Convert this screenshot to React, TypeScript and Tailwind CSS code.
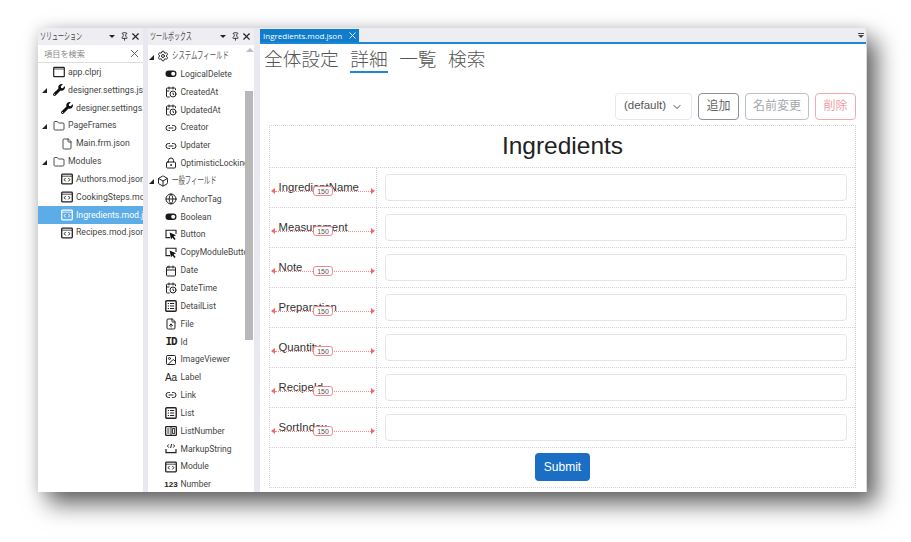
import { Box, Calendar, CalendarClock, ChevronDown, File, FileUp, Folder, Globe, Image, Link2, LockKeyhole, Pin, Settings, X } from "lucide-react"
import { FaWrench } from "react-icons/fa"
import type { ReactNode } from "react"

const uiFont = "font-['Roboto','Noto_Sans_CJK_JP',sans-serif]"
const tabFont = "font-['Open_Sans','Noto_Sans_CJK_JP',sans-serif]"
const webFont = "font-['Liberation_Sans','Noto_Sans_CJK_JP',sans-serif]"

function Toggle() {
  return (
    <svg width="12" height="12" viewBox="0 0 12 12">
      <rect x="0.5" y="2.5" width="11" height="6.5" rx="3.25" fill="#1a1a1a" />
      <circle cx="8.2" cy="5.75" r="2" fill="#fff" />
    </svg>
  )
}

function CodeBox() {
  return (
    <svg width="12" height="12" viewBox="0 0 12 12" fill="none" stroke="currentColor">
      <rect x="0.7" y="1.2" width="10.6" height="9.6" rx="0.8" strokeWidth="1.3" />
      <path d="M1 3.2h10" strokeWidth="0.8" />
      <path d="M4.6 5 3.2 6.7l1.4 1.7M7.4 5l1.4 1.7-1.4 1.7" strokeWidth="1" />
    </svg>
  )
}

function ListBox() {
  return (
    <svg width="12" height="12" viewBox="0 0 12 12" fill="none" stroke="#222">
      <rect x="0.8" y="0.8" width="10.4" height="10.4" rx="1" strokeWidth="1.4" />
      <path d="M2.8 3.5h1.2M5 3.5h4.2M2.8 6h1.2M5 6h4.2M2.8 8.5h1.2M5 8.5h4.2" strokeWidth="1.2" />
    </svg>
  )
}

function NumberBox() {
  return (
    <svg width="12" height="12" viewBox="0 0 12 12" fill="none" stroke="#222">
      <rect x="0.6" y="1.6" width="10.8" height="8.8" rx="0.8" strokeWidth="1.3" />
      <path d="M6 2v8" strokeWidth="1" />
      <path d="M2.2 4h2.2M2.2 6h2.2M2.2 8h2.2" strokeWidth="1" />
      <rect x="7.6" y="3.6" width="2" height="4.8" strokeWidth="0.9" />
    </svg>
  )
}

function Cursor() {
  return (
    <svg width="12" height="12" viewBox="0 0 12 12" fill="none">
      <path d="M5 8.6H1V1.2h10V5" stroke="#222" strokeWidth="1.1" />
      <path d="M4.6 3.6 11 6.2 8.6 7.4l2 2.6-1.2 1-2-2.6-1.4 2z" fill="#111" />
    </svg>
  )
}

function Markup() {
  return (
    <svg width="12" height="12" viewBox="0 0 12 12" fill="none" stroke="#222" strokeWidth="1">
      <path d="M1 6v3.6h10V6" strokeWidth="1.2" />
      <path d="M3.8 1.4 2.4 3 3.8 4.6M8.2 1.4 9.6 3 8.2 4.6M6.6 1 5.6 5" />
    </svg>
  )
}

const lucide = { size: 12, strokeWidth: 2, color: "#222" }

const glyph = (text: string, cls: string) => <span className={`leading-none text-[#222] ${cls}`}>{text}</span>

const toolItems: { label: string; icon: ReactNode; group?: boolean }[] = [
  { label: "システムフィールド", icon: <Settings {...lucide} />, group: true },
  { label: "LogicalDelete", icon: <Toggle /> },
  { label: "CreatedAt", icon: <CalendarClock {...lucide} /> },
  { label: "UpdatedAt", icon: <CalendarClock {...lucide} /> },
  { label: "Creator", icon: <Link2 {...lucide} /> },
  { label: "Updater", icon: <Link2 {...lucide} /> },
  { label: "OptimisticLocking", icon: <LockKeyhole {...lucide} /> },
  { label: "一般フィールド", icon: <Box {...lucide} />, group: true },
  { label: "AnchorTag", icon: <Globe {...lucide} /> },
  { label: "Boolean", icon: <Toggle /> },
  { label: "Button", icon: <Cursor /> },
  { label: "CopyModuleButton", icon: <Cursor /> },
  { label: "Date", icon: <Calendar {...lucide} /> },
  { label: "DateTime", icon: <CalendarClock {...lucide} /> },
  { label: "DetailList", icon: <ListBox /> },
  { label: "File", icon: <FileUp {...lucide} /> },
  { label: "Id", icon: glyph("ID", "font-['DejaVu_Sans_Mono',monospace] text-[11px] font-bold tracking-[-1px]") },
  { label: "ImageViewer", icon: <Image {...lucide} /> },
  { label: "Label", icon: glyph("Aa", "font-['Liberation_Sans',sans-serif] text-[10px]") },
  { label: "Link", icon: <Link2 {...lucide} /> },
  { label: "List", icon: <ListBox /> },
  { label: "ListNumber", icon: <NumberBox /> },
  { label: "MarkupString", icon: <Markup /> },
  { label: "Module", icon: <CodeBox /> },
  { label: "Number", icon: glyph("123", "font-['Liberation_Sans',sans-serif] text-[8px] font-bold") },
]

const treeItems: { label: string; icon: ReactNode; depth: number; open?: boolean; selected?: boolean }[] = [
  { label: "app.clprj", icon: <svg width="12" height="12" viewBox="0 0 12 12" fill="none" stroke="#222"><rect x="0.7" y="1.4" width="10.6" height="9.2" rx="0.6" strokeWidth="1.2" /><path d="M1 3h10" strokeWidth="0.8" /></svg>, depth: 0 },
  { label: "designer.settings.json", icon: <FaWrench size={12} color="#111" />, depth: 0, open: true },
  { label: "designer.settings.Development.json", icon: <FaWrench size={12} color="#111" />, depth: 1 },
  { label: "PageFrames", icon: <Folder {...lucide} strokeWidth={1.6} />, depth: 0, open: true },
  { label: "Main.frm.json", icon: <File {...lucide} strokeWidth={1.6} />, depth: 1 },
  { label: "Modules", icon: <Folder {...lucide} strokeWidth={1.6} />, depth: 0, open: true },
  { label: "Authors.mod.json", icon: <CodeBox />, depth: 1 },
  { label: "CookingSteps.mod.json", icon: <CodeBox />, depth: 1 },
  { label: "Ingredients.mod.json", icon: <CodeBox />, depth: 1, selected: true },
  { label: "Recipes.mod.json", icon: <CodeBox />, depth: 1 },
]

const fields = ["IngredientName", "Measurement", "Note", "Preparation", "Quantity", "RecipeId", "SortIndex"]

function Caret() {
  return <span className="h-0 w-0 border-b-[5px] border-l-[5px] border-b-[#222] border-l-transparent" />
}

function PanelHeader({ title, titleWidth }: { title: string; titleWidth: string }) {
  return (
    <div className="flex h-[17px] shrink-0 items-center bg-[#eeeef2] pl-[2px] pr-[2px] text-[#444]">
      <span className={`origin-left scale-x-[0.62] whitespace-nowrap text-[9.7px] leading-none ${titleWidth}`}>{title}</span>
      <span className="mx-[2px] h-[3px] flex-1 bg-[radial-gradient(#aaa_0.6px,transparent_0.7px)] bg-[length:2px_2px]" />
      <span className="ml-[4px] h-0 w-0 border-x-[3px] border-t-[3px] border-x-transparent border-t-[#222]" />
      <Pin size={9} strokeWidth={2.2} color="#222" className="ml-[5px]" />
      <X size={11} strokeWidth={2.4} color="#222" className="ml-[1px]" />
    </div>
  )
}

function SolutionPanel() {
  return (
    <div className="flex h-full w-[105px] shrink-0 flex-col bg-white">
      <PanelHeader title="ソリューション" titleWidth="w-[44px]" />
      <div className="flex h-[18px] shrink-0 items-center border-b border-[#ddd] pl-[6px] pr-[2px]">
        <span className="flex-1 pt-[1px] text-[8.2px] leading-none text-[#888]">項目を検索</span>
        <X size={13} strokeWidth={1.7} color="#555" />
      </div>
      <div className="pt-[0.5px]">
        {treeItems.map((item) => (
          <div
            key={item.label}
            className={`relative flex h-[17.85px] items-center overflow-hidden whitespace-nowrap text-[8.7px] ${item.selected ? "bg-[#5cace8] text-white" : "text-[#444]"} ${item.depth ? "pl-[23px]" : "pl-[15px]"}`}
          >
            {item.open && <span className="absolute left-[4px] top-[7px] flex"><Caret /></span>}
            <span className={`flex w-[12px] shrink-0 justify-center ${item.selected ? "text-white" : "text-[#222]"}`}>{item.icon}</span>
            <span className="ml-[3px]">{item.label}</span>
          </div>
        ))}
      </div>
    </div>
  )
}

function ToolboxPanel() {
  return (
    <div className="flex h-full w-[106px] shrink-0 flex-col bg-white">
      <PanelHeader title="ツールボックス" titleWidth="w-[46px]" />
      <div className="flex min-h-0 flex-1">
        <div className="min-w-0 flex-1 overflow-hidden pt-[2.5px]">
          {toolItems.map((item) => (
            <div
              key={item.label}
              className={`relative flex h-[17.85px] items-center whitespace-nowrap text-[8.5px] text-[#444] ${item.group ? "pl-[9px]" : "pl-[17px]"}`}
            >
              {item.group && <span className="absolute left-[1px] top-[7px] flex"><Caret /></span>}
              <span className="flex w-[12px] shrink-0 justify-center text-[#222]">{item.icon}</span>
              {item.group ? (
                <span className="ml-[3px] origin-left scale-x-[0.66] text-[9.7px] text-[#555]">{item.label}</span>
              ) : (
                <span className="ml-[3.5px]">{item.label}</span>
              )}
            </div>
          ))}
        </div>
        <div className="flex w-[9px] shrink-0 flex-col items-center">
          <span className="mt-[3px] h-0 w-0 border-x-[4px] border-b-[4px] border-x-transparent border-b-[#bbb]" />
          <div className="mt-[39px] mr-[1px] h-[249px] w-[8px] bg-[#b8b8b8]" />
        </div>
      </div>
    </div>
  )
}

function Measure() {
  return (
    <div className="absolute inset-x-0 top-[20px] flex items-center px-[1px]">
      <span className="h-0 w-0 border-y-[3.5px] border-r-[4px] border-y-transparent border-r-[#ef6a6a]" />
      <span className="flex-1 border-t border-dotted border-[#f08a8a]" />
      <span className="h-0 w-0 border-y-[3.5px] border-l-[4px] border-y-transparent border-l-[#ef6a6a]" />
      <span className="absolute left-[43px] top-[-2px] flex h-[10px] w-[20px] items-center justify-center rounded-[3px] border border-[#f08a8a] bg-white text-[7px] leading-none text-[#555]">
        150
      </span>
    </div>
  )
}

function FieldRow({ name }: { name: string }) {
  return (
    <div className="flex h-[40px] border-b border-dotted border-[#d4d4dc]">
      <div className="relative w-[107px] shrink-0 border-r border-dotted border-[#d4d4dc] pl-[8.5px] pt-[12px] text-[11.3px] leading-[15px] text-[#333]">
        {name}
        <Measure />
      </div>
      <div className="flex-1 px-[8px] pt-[6px]">
        <div className="h-[27px] rounded-[4px] border border-[#e2e4e8] bg-white" />
      </div>
    </div>
  )
}

function EditorPane() {
  return (
    <div className="flex h-full min-w-0 flex-1 flex-col border-r border-[#d8d8e0] bg-white">
      <div className="flex h-[16px] shrink-0 items-stretch justify-between border-b-2 border-[#1c86d8] bg-[#eeeef2]">
        <div className={`mt-[1px] flex w-[99px] items-center bg-[#0f7ccc] pl-[3px] text-[8px] leading-none text-white ${tabFont}`}>
          <span className="flex-1 whitespace-nowrap">Ingredients.mod.json</span>
          <X size={11} strokeWidth={2} color="#fff" className="mr-[1px] shrink-0" />
        </div>
        <div className="mr-[2px] flex flex-col items-center justify-center gap-[1px]">
          <span className="h-[1px] w-[6px] bg-[#444]" />
          <span className="h-0 w-0 border-x-[3px] border-t-[3px] border-x-transparent border-t-[#444]" />
        </div>
      </div>
      <div className={`flex min-h-0 flex-1 flex-col pl-[9px] pr-[10px] ${webFont}`}>
        <div className="flex h-[30px] shrink-0 items-start gap-[11.5px] pt-[5px] text-[18.7px] font-light leading-[22px] text-[#555]">
          <span className="-ml-[5px]">全体設定</span>
          <span className="border-b-2 border-[#1c86d8]">詳細</span>
          <span>一覧</span>
          <span>検索</span>
        </div>
        <div className="mt-[19px] flex h-[27px] shrink-0 items-center justify-end gap-[6px] text-[12px] leading-none">
          <div className="flex h-[27px] w-[77px] items-center justify-center gap-[5px] rounded-[4px] border border-[#e8e8ec] pb-[2px] text-[11.5px] text-[#555]">
            (default)
            <ChevronDown size={12} strokeWidth={2} color="#444" className="mt-[2px]" />
          </div>
          <div className="flex h-[27px] w-[41px] items-center justify-center rounded-[4px] border border-[#8a939c] pb-[1px] text-[#666]">追加</div>
          <div className="flex h-[27px] w-[64px] items-center justify-center rounded-[4px] border border-[#bcc1c6] pb-[1px] text-[#a4a8ac]">名前変更</div>
          <div className="flex h-[27px] w-[41px] items-center justify-center rounded-[4px] border border-[#f2aab0] pb-[1px] text-[#f0a0a8]">削除</div>
        </div>
        <div className="mt-[5px] flex flex-col border border-dotted border-[#d4d4dc]">
          <div className="flex h-[42px] items-center justify-center border-b border-dotted border-[#d4d4dc] text-[24.5px] text-[#222]">
            Ingredients
          </div>
          {fields.map((name) => (
            <FieldRow key={name} name={name} />
          ))}
          <div className="flex h-[39px] justify-center pt-[5px]">
            <div className="flex h-[28px] w-[55px] items-center justify-center rounded-[4px] bg-[#1a6fc4] text-[12px] text-white">Submit</div>
          </div>
        </div>
      </div>
    </div>
  )
}

export default function App() {
  return (
    <div className="h-[542px] w-[911px] overflow-hidden bg-white pl-[38px] pt-[28px]">
      <div className={`flex h-[464px] w-[829px] bg-[#e8e8f0] shadow-[10px_12px_22px_rgba(0,0,0,0.6),0_0_14px_rgba(0,0,0,0.12)] ${uiFont}`}>
        <SolutionPanel />
        <div className="w-[5px] shrink-0" />
        <ToolboxPanel />
        <div className="w-[6px] shrink-0" />
        <EditorPane />
      </div>
    </div>
  )
}
